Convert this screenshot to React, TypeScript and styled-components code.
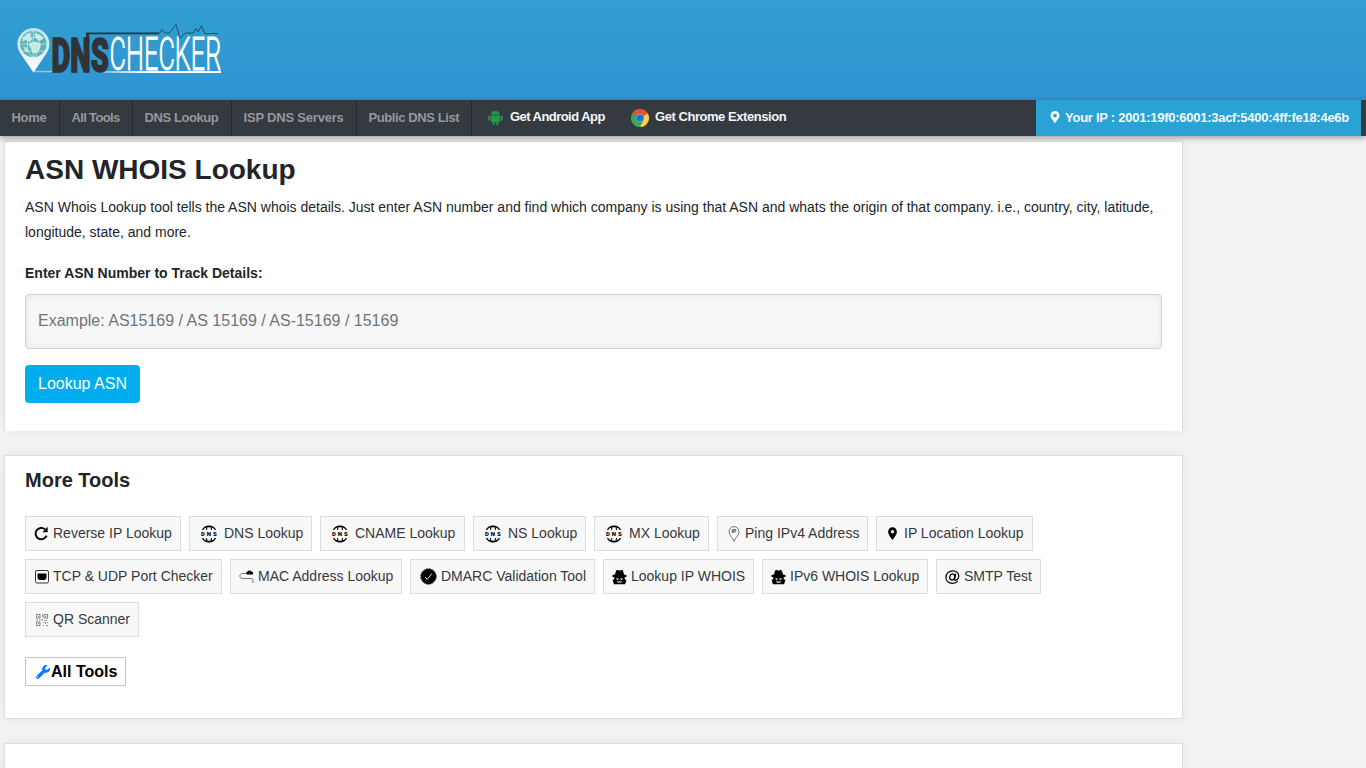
import React from 'react';
import styled, { createGlobalStyle } from 'styled-components';
import { FaMapMarkerAlt, FaWrench } from 'react-icons/fa';
import { MdLocationOn } from 'react-icons/md';

const GlobalStyle = createGlobalStyle`
  *, *::before, *::after { box-sizing: border-box; }
  body {
    margin: 0;
    background: #f3f3f3;
    color: #212529;
    font-family: "Liberation Sans", Arial, sans-serif;
    font-size: 14px;
  }
`;

const Page = styled.div`
  height: 100vh;
  overflow: hidden;
`;

const Header = styled.header`
  height: 100px;
  padding-left: 12px;
  background: linear-gradient(180deg, #309fd0 0%, #3094d2 100%);
`;

const Nav = styled.nav`
  position: relative;
  z-index: 1;
  display: flex;
  height: 36px;
  padding-right: 5px;
  background: #343a40;
  box-shadow: 0 2px 6px rgba(0, 0, 0, 0.35);
  font-size: 13px;
  font-weight: 700;
`;

const NavItem = styled.a<{ $width: number; $spacing: number }>`
  display: flex;
  align-items: center;
  width: ${(p) => p.$width}px;
  padding: 0 0 2px 11.5px;
  border-right: 1px solid #24292e;
  color: #95989b;
  letter-spacing: ${(p) => p.$spacing}px;
  white-space: nowrap;
`;

const PromoLink = styled.a<{ $width: number; $spacing: number }>`
  display: flex;
  align-items: center;
  gap: 6px;
  width: ${(p) => p.$width}px;
  padding: 0 0 1px 15px;
  color: #f4f5f5;
  letter-spacing: ${(p) => p.$spacing}px;
  white-space: nowrap;
`;

const PromoText = styled.span`
  padding-bottom: 2px;
`;

const IpBadge = styled.div`
  display: flex;
  align-items: center;
  gap: 4px;
  width: 325px;
  margin-left: auto;
  padding: 0 0 2px 13px;
  background: #29a2d6;
  color: #f5fbfd;
  letter-spacing: -0.26px;
  white-space: nowrap;
`;

const Main = styled.main`
  display: flex;
  flex-direction: column;
  gap: 24px;
  width: 1179px;
  margin: 5px 0 0 4px;
`;

const Card = styled.section<{ $height: number; $openBottom?: boolean }>`
  height: ${(p) => p.$height}px;
  padding: 0 20px;
  background: #fff;
  border: 1px solid #dedede;
  ${(p) => p.$openBottom && 'border-bottom: 0;'}
  box-shadow: 0 0 12px rgba(0, 0, 0, 0.06);
`;

const Title = styled.h1`
  margin: 11px 0 8px;
  font-size: 28px;
  line-height: 34px;
`;

const Description = styled.p`
  margin: 0;
  line-height: 25px;
`;

const Label = styled.label`
  display: block;
  margin: 20px 0 12px;
  font-weight: 700;
  line-height: 17px;
`;

const AsnInput = styled.input`
  display: block;
  width: 100%;
  height: 55px;
  padding: 0 12px 2px;
  border: 1px solid #ced0d2;
  border-radius: 4px;
  background: #f7f7f7;
  box-shadow: inset 0 0 8px rgba(0, 0, 0, 0.07);
  font: 16px "Liberation Sans", Arial, sans-serif;
  &::placeholder { color: #6c757d; opacity: 1; }
`;

const SubmitButton = styled.button`
  width: 115px;
  height: 38px;
  margin-top: 16px;
  padding: 0 0 1px;
  border: 0;
  border-radius: 4px;
  background: #00aeef;
  color: #fff;
  font: 16px "Liberation Sans", Arial, sans-serif;
`;

const SectionTitle = styled.h2`
  margin: 12px 0 24px;
  font-size: 20px;
  line-height: 24px;
`;

const ToolList = styled.div`
  display: flex;
  flex-wrap: wrap;
  gap: 8px;
  width: 1040px;
`;

const ToolLink = styled.a<{ $width: number }>`
  display: flex;
  align-items: center;
  width: ${(p) => p.$width}px;
  height: 35px;
  border: 1px solid #dcdcdc;
  background: #f8f8f8;
  color: #36393c;
  white-space: nowrap;
`;

const ToolName = styled.span`
  padding-bottom: 2px;
`;

const IconSlot = styled.span<{ $width: number }>`
  display: flex;
  align-items: center;
  justify-content: center;
  flex: none;
  width: ${(p) => p.$width}px;
  margin-left: 8px;
  margin-right: 4px;
  color: #000;
`;

const AllToolsLink = styled.a`
  display: flex;
  align-items: center;
  gap: 1px;
  width: 101px;
  height: 29px;
  margin-top: 20px;
  padding-left: 10px;
  border: 1px solid #c6c6bd;
  background: #fff;
  color: #000;
  font-size: 16px;
  font-weight: 700;
  white-space: nowrap;
`;

const Logo = () => (
  <svg width="230" height="100" viewBox="12 0 230 100" role="img" aria-label="DNS Checker">
    <defs>
      <linearGradient id="pin" x1="0" y1="0" x2="0" y2="1">
        <stop offset="0" stopColor="#b4e3ed" />
        <stop offset="1" stopColor="#fff" />
      </linearGradient>
      <linearGradient id="rule" gradientUnits="userSpaceOnUse" x1="100" y1="0" x2="145" y2="0">
        <stop offset="0" stopColor="#fff" stopOpacity="0.3" />
        <stop offset="1" stopColor="#fff" />
      </linearGradient>
    </defs>
    <path d="M33.500 72.500L20.500 53.500A16 16 0 1 1 46.300 53.500z" fill="url(#pin)" />
    <circle cx="33.3" cy="44" r="13.2" fill="#5cb2b4" />
    <g fill="#c3e9e4">
      <path d="M22.5 38l5-5 4 1-1 3 2 2-3 3-4-2-3 2zM35 33l6 2 2.5 4-4 2-3-2-2-3zM30 42.5l7-1 4 3-1 4-4 5-4-1-1-4-2-3zM23 46l4 2 1 5-3-2z" />
    </g>
    <g fill="none" stroke="#d1f0ee" strokeWidth="0.7">
      <ellipse cx="33.3" cy="44" rx="6" ry="13" />
      <path d="M20.3 44h26M22 37.5h22.6M22 51h22.6M33.3 31v26" />
    </g>
    <path d="M34 71.6H52" stroke="#8cc8e8" strokeWidth="1.4" />
    <rect x="100" y="71" width="121" height="2" fill="url(#rule)" />
    <text x="51.500" y="72" fill="#303236" stroke="#303236" strokeWidth="1.6" fontFamily="Roboto, sans-serif" fontWeight="900" fontSize="49" textLength="57.500" lengthAdjust="spacingAndGlyphs">DNS</text>
    <text x="109.600" y="69.7" fill="#fff" stroke="#fff" strokeWidth="0.8" fontFamily="Roboto, sans-serif" fontWeight="300" fontSize="45.5" textLength="111.800" lengthAdjust="spacingAndGlyphs">CHECKER</text>
    <path d="M158 33.6l1.5-.5 2.500-3.500 3 3.500h4.500l6.500-8.500 4 14 5-5.500h8l3-4.500 2 3.500 3.500-6.500 3 8H218" fill="none" stroke="#24516a" strokeWidth="1" />
    <path d="M86 33.4H159" stroke="#29353d" strokeWidth="1.8" />
    <path d="M86 33h3.200v10H86z" fill="#303236" />
  </svg>
);

const AndroidIcon = () => (
  <svg width="17" height="17" viewBox="0 0 17 17" fill="#1f9d48">
    <path d="M4 5.8C4 3.500 5.500 2 8.500 2S13 3.500 13 5.800z" opacity="0.85" />
    <path d="M5.300 1l1.200 1.800M11.700 1l-1.200 1.800" stroke="#1f9d48" strokeWidth="0.6" />
    <path d="M4 6.400h9v5.800a1 1 0 0 1-1 1H5a1 1 0 0 1-1-1z" />
    <rect x="1.3" y="6.4" width="2" height="5.4" rx="1" />
    <rect x="13.7" y="6.4" width="2" height="5.4" rx="1" />
    <rect x="5.7" y="11" width="2" height="5.2" rx="1" />
    <rect x="9.3" y="11" width="2" height="5.2" rx="1" />
    <circle cx="6.6" cy="4.3" r="0.4" fill="#dff3e5" />
    <circle cx="10.4" cy="4.3" r="0.4" fill="#dff3e5" />
  </svg>
);

const ChromeIcon = () => (
  <svg width="18" height="18" viewBox="0 0 48 48">
    <path d="M24 24L3.2 12A24 24 0 0 1 44.8 12z" fill="#ea4f35" />
    <path d="M24 24L44.8 12A24 24 0 0 1 24 48z" fill="#fcd04b" />
    <path d="M24 24L24 48A24 24 0 0 1 3.2 12z" fill="#3ba757" />
    <path d="M24 13h21.3l-.5-1H24z" fill="#ea4f35" />
    <path d="M33.5 29.5L24 48l-5-10zM14.5 29.5L3.2 12 14 18z" fill="#3ba757" />
    <circle cx="24" cy="24" r="10.5" fill="#9cc4dc" />
    <circle cx="24" cy="24" r="9.6" fill="#1677c9" />
  </svg>
);

const RotateIcon = () => (
  <svg width="15" height="15" viewBox="0 0 15 15">
    <path d="M12.6 9.600A5.700 5.700 0 1 1 11 3.300" fill="none" stroke="#000" strokeWidth="1.9" />
    <path d="M13.700.8v5.500H8.400z" fill="#000" />
  </svg>
);

const DnsIcon = () => (
  <svg width="18" height="18" viewBox="0 0 18 18">
    <g fill="none" stroke="#000">
      <path d="M2.500 4.800C4 2.300 6.200 1.100 9 1.100s5 1.200 6.500 3.700M2.500 13.200C4 15.700 6.200 16.900 9 16.900s5-1.200 6.500-3.700" strokeWidth="1.300" />
      <path d="M6.300 4.800L7 2.500M11.700 4.800L11 2.500M6.300 13.200l.700 2.300M11.700 13.200l-.700 2.300" strokeWidth="1.100" />
    </g>
    <path d="M4.500 3q4.500-1.500 9 0L12 1.500 9 .700 6 1.500zM4.500 15q4.500 1.500 9 0L12 16.500l-3 .800-3-.800z" />
    <g fontFamily="Roboto, sans-serif" fontSize="6" fontWeight="900">
      <text x="1" y="11.200">D</text>
      <text x="6.800" y="11.200">N</text>
      <text x="12.900" y="11.200">S</text>
    </g>
  </svg>
);

const PingIcon = () => (
  <svg width="12" height="16" viewBox="0 0 12 16">
    <path d="M6 15.3C5 12 1 9.500 1 5.600a5 5 0 0 1 10 0C11 9.500 7 12 6 15.300z" fill="none" stroke="#555" strokeWidth="0.8" />
    <text x="3.6" y="7.4" fontSize="5" fontWeight="700" fontFamily="Roboto, sans-serif" fill="#333">IP</text>
  </svg>
);

const PortIcon = () => (
  <svg width="14" height="14" viewBox="0 0 14 14">
    <rect x="0.5" y="0.5" width="13" height="12.5" rx="1.5" fill="none" stroke="#333" />
    <path d="M2.500 3.500h9V8L10 10H4L2.500 8z" fill="#000" />
  </svg>
);

const CableIcon = () => (
  <svg width="15" height="15" viewBox="0 0 15 15">
    <path d="M8 4.500H4C-.3 4.500-.3 9.500 4 9.500h8q2 0 2 2v2.500" fill="none" stroke="#666" strokeWidth="0.9" />
    <path d="M7.500 3h1V1.800h4V3H14v2.500H7.500z" fill="#000" />
  </svg>
);

const VerifiedIcon = () => (
  <svg width="17" height="17" viewBox="0 0 17 17">
    <circle cx="8.5" cy="8.5" r="7.5" />
    <circle cx="8.5" cy="8.5" r="7.6" fill="none" stroke="#000" strokeWidth="1" strokeDasharray="2.4 0.6" />
    <path d="M5 9l2.300 2.400L11.800 5.600" fill="none" stroke="#fff" strokeWidth="0.9" />
  </svg>
);

const SpyIcon = () => (
  <svg width="16" height="16" viewBox="0 0 16 16">
    <path d="M3.200 5.200L4.300 1.300C4.600.300 6 .200 6.700.700q1.300.600 2.600 0c.700-.500 2.100-.400 2.400.600l1.100 3.900c1.700.300 3 .900 3 1.600 0 1-2.700 1.700-7.800 1.700S.200 7.800.200 6.800c0-.700 1.300-1.300 3-1.600z" />
    <path d="M2.500 7.500h11v2.700l1.800 1-1.300 4.500H2L.700 11.200l1.800-1z" />
    <path d="M4.600 9.400l2.700.2-.6 1.200H5.100zM11.400 9.400l-2.700.2.6 1.200h1.600zM5.200 12.200q2.800 1.200 5.600 0L9.500 14.500 8 13.600l-1.500.900z" fill="#f8f8f8" />
  </svg>
);

const QrIcon = () => (
  <svg width="12" height="12" viewBox="0 0 12 12">
    <g fill="none" stroke="#777" strokeWidth="0.9">
      <path d="M.5.5h3.500v3.500H.5zM8 .5h3.500v3.500H8zM.5 8h3.500v3.500H.5z" />
    </g>
    <path d="M2 2h1v1H2zM9 2h1v1H9zM2 9h1v1H2zM6 0h.8v3H6zM6 5h.8v2H6zM0 5.500h2v.8H0zM3 5.500h2v.8H3zM8 6h3v.8H8zM7 8h1v1H7zM9 8h1v2H9zM11 8h1v1h-1zM7 11h1v1H7zM10 11h2v1h-2z" fill="#888" />
  </svg>
);

const AtIcon = () => (
  <svg width="16" height="16" viewBox="0 0 24 24" fill="none" stroke="#000" strokeWidth="2">
    <ellipse cx="11.6" cy="12" rx="4" ry="4.8" transform="rotate(18 11.6 12)" />
    <path d="M17 6.500l-1.500 8c-.6 3.500 2 3.300 4 1.500 1.700-1.500 2.500-3.500 2.500-5.500C22 5.500 18 2 12.500 2 6 2 1.500 6.500 1.500 12.500c0 6 4.500 9.500 10.500 9.500 3.500 0 6.500-1 8.500-3" />
  </svg>
);

type Tool = { name: string; width: number; slot: number; icon: React.ReactNode };

const tools: Tool[] = [
  { name: 'Reverse IP Lookup', width: 156, slot: 15, icon: <RotateIcon /> },
  { name: 'DNS Lookup', width: 123, slot: 22, icon: <DnsIcon /> },
  { name: 'CNAME Lookup', width: 145, slot: 22, icon: <DnsIcon /> },
  { name: 'NS Lookup', width: 113, slot: 22, icon: <DnsIcon /> },
  { name: 'MX Lookup', width: 115, slot: 22, icon: <DnsIcon /> },
  { name: 'Ping IPv4 Address', width: 151, slot: 15, icon: <PingIcon /> },
  { name: 'IP Location Lookup', width: 157, slot: 15, icon: <MdLocationOn size={15} /> },
  { name: 'TCP & UDP Port Checker', width: 197, slot: 15, icon: <PortIcon /> },
  { name: 'MAC Address Lookup', width: 172, slot: 15, icon: <CableIcon /> },
  { name: 'DMARC Validation Tool', width: 185, slot: 18, icon: <VerifiedIcon /> },
  { name: 'Lookup IP WHOIS', width: 151, slot: 15, icon: <SpyIcon /> },
  { name: 'IPv6 WHOIS Lookup', width: 166, slot: 15, icon: <SpyIcon /> },
  { name: 'SMTP Test', width: 105, slot: 15, icon: <AtIcon /> },
  { name: 'QR Scanner', width: 114, slot: 15, icon: <QrIcon /> },
];

const navItems = [
  { name: 'Home', width: 60, spacing: -0.3 },
  { name: 'All Tools', width: 73, spacing: -0.65 },
  { name: 'DNS Lookup', width: 99, spacing: -0.42 },
  { name: 'ISP DNS Servers', width: 125, spacing: -0.2 },
  { name: 'Public DNS List', width: 115, spacing: -0.4 },
];

export default function App() {
  return (
    <Page>
      <GlobalStyle />
      <Header>
        <Logo />
      </Header>
      <Nav>
        {navItems.map((item) => (
          <NavItem key={item.name} $width={item.width} $spacing={item.spacing}>{item.name}</NavItem>
        ))}
        <PromoLink $width={144} $spacing={-0.55}>
          <AndroidIcon />
          <PromoText>Get Android App</PromoText>
        </PromoLink>
        <PromoLink $width={190} $spacing={-0.45}>
          <ChromeIcon />
          <PromoText>Get Chrome Extension</PromoText>
        </PromoLink>
        <IpBadge>
          <FaMapMarkerAlt size={12} />
          Your IP : 2001:19f0:6001:3acf:5400:4ff:fe18:4e6b
        </IpBadge>
      </Nav>
      <Main>
        <Card $height={290} $openBottom>
          <Title>ASN WHOIS Lookup</Title>
          <Description>
            ASN Whois Lookup tool tells the ASN whois details. Just enter ASN number and find which company is using that ASN and whats the origin of that company. i.e., country, city, latitude, longitude, state, and more.
          </Description>
          <Label htmlFor="asn">Enter ASN Number to Track Details:</Label>
          <AsnInput id="asn" placeholder="Example: AS15169 / AS 15169 / AS-15169 / 15169" />
          <SubmitButton>Lookup ASN</SubmitButton>
        </Card>
        <Card $height={264}>
          <SectionTitle>More Tools</SectionTitle>
          <ToolList>
            {tools.map((tool) => (
              <ToolLink key={tool.name} $width={tool.width}>
                <IconSlot $width={tool.slot}>{tool.icon}</IconSlot>
                <ToolName>{tool.name}</ToolName>
              </ToolLink>
            ))}
          </ToolList>
          <AllToolsLink>
            <FaWrench size={14} color="#0b7bff" />
            All Tools
          </AllToolsLink>
        </Card>
        <Card $height={100} />
      </Main>
    </Page>
  );
}
